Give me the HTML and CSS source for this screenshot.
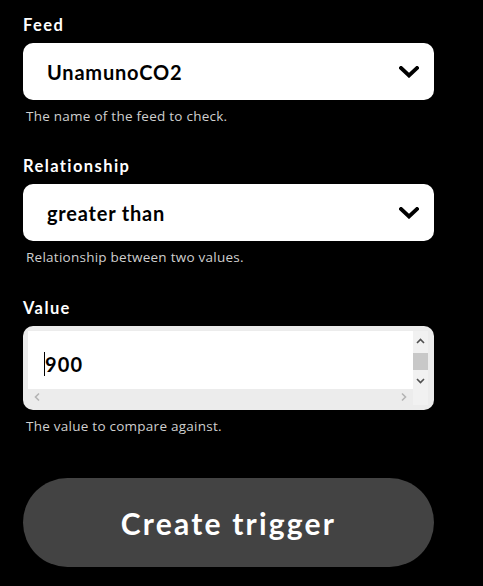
FILE: index.html
```html
<!DOCTYPE html>
<html>
<head>
<meta charset="utf-8">
<link rel="stylesheet" href="styles.css">
</head>
<body>
<main class="form">
  <div class="field">
    <label class="label">Feed</label>
    <div class="select">
      <span class="select-text">UnamunoCO2</span>
      <svg class="chevron" width="20" height="12" viewBox="0 0 20 12"><polyline points="2,2 10,9.5 18,2" fill="none" stroke="#000" stroke-width="3.8" stroke-linecap="square"/></svg>
    </div>
    <p class="help">The name of the feed to check.</p>
  </div>
  <div class="field">
    <label class="label">Relationship</label>
    <div class="select">
      <span class="select-text">greater than</span>
      <svg class="chevron" width="20" height="12" viewBox="0 0 20 12"><polyline points="2,2 10,9.5 18,2" fill="none" stroke="#000" stroke-width="3.8" stroke-linecap="square"/></svg>
    </div>
    <p class="help">Relationship between two values.</p>
  </div>
  <div class="field last">
    <label class="label">Value</label>
    <div class="textbox">
      <div class="text-area"><span class="caret"></span><span class="value-text">900</span></div>
      <div class="vscroll">
        <svg class="arrow" width="15" height="20" viewBox="0 0 15 20"><polyline points="4,12 7.5,8.5 11,12" fill="none" stroke="#505050" stroke-width="1.6"/></svg>
        <div class="thumb"></div>
        <svg class="arrow" width="15" height="20" viewBox="0 0 15 20"><polyline points="4,7 7.5,10.5 11,7" fill="none" stroke="#505050" stroke-width="1.6"/></svg>
      </div>
      <div class="hscroll">
        <svg width="16" height="16" viewBox="0 0 16 16"><polyline points="10,4.5 6.5,8 10,11.5" fill="none" stroke="#b4b4b4" stroke-width="1.6"/></svg>
        <svg width="16" height="16" viewBox="0 0 16 16"><polyline points="6,4.5 9.5,8 6,11.5" fill="none" stroke="#b4b4b4" stroke-width="1.6"/></svg>
      </div>
    </div>
    <p class="help">The value to compare against.</p>
  </div>
  <button class="submit">Create trigger</button>
</main>
</body>
</html>
```

FILE: styles.css
```css
html, body {
  margin: 0;
  padding: 0;
  background: #000;
}
body {
  font-family: Lato, "Open Sans", sans-serif;
  color: #fff;
}
.form {
  width: 411px;
  margin-left: 23px;
  padding-top: 14px;
  display: flex;
  flex-direction: column;
}
.field {
  display: flex;
  flex-direction: column;
  margin-bottom: 31px;
}
.field.last {
  margin-top: 1px;
}
.label {
  font-size: 16.5px;
  font-weight: 700;
  line-height: 23px;
  height: 23px;
  margin-bottom: 6px;
  letter-spacing: 1.4px;
}
.select {
  height: 57px;
  background: #fff;
  border-radius: 10px;
  display: flex;
  align-items: center;
  justify-content: space-between;
  padding: 0 15px 0 24px;
  color: #000;
}
.select-text {
  font-size: 20px;
  font-weight: 700;
  letter-spacing: 0.8px;
}
.chevron {
  display: block;
}
.help {
  margin: 8px 0 0 3px;
  font-family: "Open Sans", sans-serif;
  font-size: 13.5px;
  line-height: 16px;
  letter-spacing: 0.25px;
  color: #cfcfcf;
}
.textbox {
  width: 411px;
  height: 84px;
  box-sizing: border-box;
  background: #ececec;
  border-radius: 10px;
  padding: 5px;
  display: grid;
  grid-template-columns: 385px 15px;
  grid-template-rows: 58px 16px;
}
.text-area {
  background: #fff;
  padding: 21px 0 0 16px;
  box-sizing: border-box;
  display: flex;
  align-items: flex-start;
  color: #000;
}
.caret {
  width: 1px;
  height: 24px;
  background: #000;
}
.value-text {
  font-size: 20px;
  font-weight: 700;
  line-height: 24px;
  letter-spacing: 1.2px;
}
.vscroll {
  grid-row: 1 / 3;
  grid-column: 2;
  background: #f1f1f1;
  display: flex;
  flex-direction: column;
}
.arrow {
  display: block;
}
.thumb {
  height: 17px;
  margin: 2px 0 2px;
  background: #c8c8c8;
}
.hscroll {
  grid-row: 2;
  grid-column: 1;
  background: #ececec;
  display: flex;
  justify-content: space-between;
  align-items: center;
  padding: 0 1px;
}
.hscroll svg {
  display: block;
}
.submit {
  margin-top: 13px;
  height: 89px;
  width: 411px;
  border: none;
  border-radius: 45px;
  background: #434343;
  color: #fff;
  font-family: Lato, "Open Sans", sans-serif;
  font-size: 30px;
  font-weight: 700;
  letter-spacing: 2.2px;
  padding: 0;
}
```
